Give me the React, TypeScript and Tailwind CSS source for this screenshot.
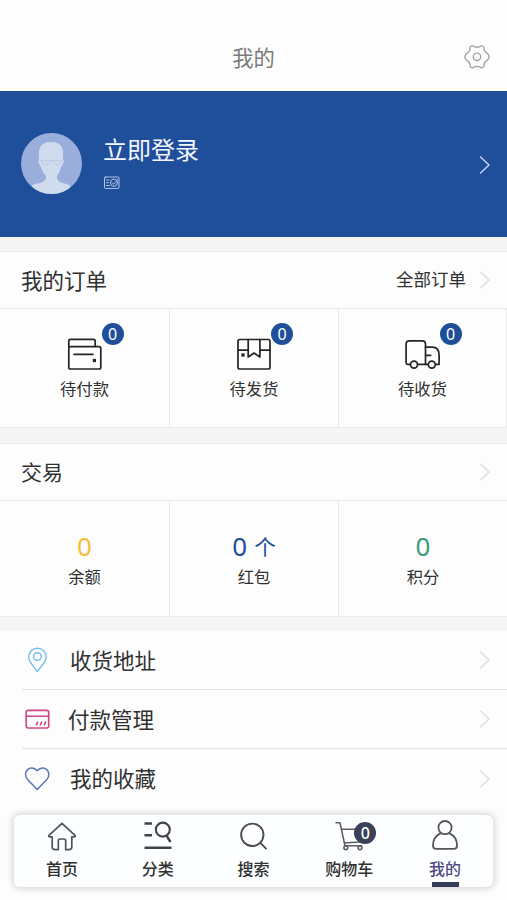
import type { ReactNode } from "react";

const stroke = {
  fill: "none",
  stroke: "currentColor",
  strokeLinecap: "round",
  strokeLinejoin: "round",
} as const;

function Chevron({ className = "text-[#dedede]" }: { className?: string }) {
  return (
    <svg width="12" height="20" viewBox="0 0 12 20" className={className} {...stroke} strokeWidth="1.4">
      <path d="M1.5 2 L10 10 L1.5 18" />
    </svg>
  );
}

function Badge({ className, children }: { className: string; children: ReactNode }) {
  return (
    <span
      className={`absolute flex h-[22px] w-[22px] items-center justify-center rounded-full pb-px font-['Noto_Sans',sans-serif] text-[16px] leading-none text-white ${className}`}
    >
      {children}
    </span>
  );
}

const orders = [
  {
    name: "待付款",
    icon: (
      <svg width="36" height="34" viewBox="0 0 36 34" {...stroke} strokeWidth="1.7">
        <path d="M1.8 8.5 V3 Q1.8 1.3 3.5 1.3 H26.5 Q28.2 1.3 28.2 3 V8.5" />
        <rect x="1.8" y="8.7" width="32" height="22.3" rx="1.8" />
        <path d="M7 16.3 H26" />
        <rect x="25.8" y="20.9" width="3.2" height="3.2" fill="currentColor" stroke="none" />
      </svg>
    ),
  },
  {
    name: "待发货",
    icon: (
      <svg width="36" height="34" viewBox="0 0 36 34" {...stroke} strokeWidth="1.7">
        <rect x="2" y="1.5" width="32" height="29.5" rx="1.8" />
        <path d="M2 12.2 H12 M24 12.2 H34" />
        <path d="M12.2 1.5 V19 L18 15 L23.9 19 V1.5" />
        <rect x="5.4" y="15.4" width="3.2" height="3.2" fill="currentColor" stroke="none" />
      </svg>
    ),
  },
  {
    name: "待收货",
    icon: (
      <svg width="36" height="34" viewBox="0.7 0 36 34" {...stroke} strokeWidth="1.7">
        <path d="M5.8 26.3 H3.2 Q1.8 26.3 1.8 24.8 V6 Q1.8 2.8 5 2.8 H18 Q21.2 2.8 21.2 6 V26.3 H13.6" />
        <path d="M21.2 9.2 H28 Q34.8 9.2 34.8 17 V26.3 H31.4 M21.2 26.3 H23.6 M21.5 17.4 H26.3" />
        <circle cx="9.7" cy="26.6" r="3.5" />
        <circle cx="27.5" cy="26.6" r="3.5" />
      </svg>
    ),
  },
];

const assets = [
  { name: "余额", value: "0", unit: "", color: "text-[#f5bd38]" },
  { name: "红包", value: "0", unit: "个", color: "text-[#1f4e9c]" },
  { name: "积分", value: "0", unit: "", color: "text-[#3a9b82]" },
];

const menu = [
  {
    name: "收货地址",
    gap: "ml-[19px]",
    icon: (
      <svg width="28" height="28" viewBox="0 0 28 28" className="text-[#72bdf0]" {...stroke} strokeWidth="1.4">
        <path d="M14.4 25.5 C11.9 21.5 5.6 16.5 5.6 10.8 A8.8 8.6 0 0 1 23.2 10.8 C23.2 16.5 16.9 21.5 14.4 25.5 Z" />
        <circle cx="14.4" cy="10.5" r="3.8" />
      </svg>
    ),
  },
  {
    name: "付款管理",
    gap: "ml-[17px]",
    icon: (
      <svg width="28" height="28" viewBox="0 0 28 28" className="text-[#cf4686]" {...stroke} strokeWidth="1.6">
        <rect x="3.2" y="5.4" width="22.5" height="17.6" rx="2" />
        <path d="M3.2 11.2 H25.7 M13.4 19.8 L14.6 17.2 M17.4 19.8 L18.6 17.2 M21.4 19.8 L22.6 17.2" />
      </svg>
    ),
  },
  {
    name: "我的收藏",
    gap: "ml-[19px]",
    icon: (
      <svg width="28" height="28" viewBox="0 0 28 28" className="text-[#5578b8]" {...stroke} strokeWidth="1.5">
        <path d="M14.2 24.5 L4.6 14.6 C-1.6 7 7.6 -1.4 14.2 5.8 C20.8 -1.4 30 7 23.8 14.6 Z" />
      </svg>
    ),
  },
];

const tabs = [
  {
    name: "首页",
    icon: (
      <svg width="32" height="32" viewBox="0 0 32 32" className="text-[#50525a]" {...stroke} strokeWidth="1.7">
        <path d="M16 2.4 L29 14.3 Q30 15.8 28.2 15.8 H25.8 V26 Q25.8 28.6 23 28.6 H19.7 V20 Q19.7 18 18 18 H14 Q12.3 18 12.3 20 V28.6 H9 Q6.2 28.6 6.2 26 V15.8 H3.8 Q2 15.8 3 14.3 Z" />
      </svg>
    ),
  },
  {
    name: "分类",
    icon: (
      <svg width="32" height="32" viewBox="0 0 32 32" className="text-[#42434a]" {...stroke} strokeWidth="2.5" strokeLinecap="butt">
        <path d="M2.5 2.6 H10 M2.5 14.2 H10 M2.5 26.8 H29.5" />
        <circle cx="20.8" cy="8.6" r="7" strokeWidth="2.1" />
        <path d="M24.4 14.4 L28.5 21" />
      </svg>
    ),
  },
  {
    name: "搜索",
    icon: (
      <svg width="32" height="32" viewBox="0 0 32 32" className="text-[#4b4c54]" {...stroke} strokeWidth="1.9">
        <circle cx="15.3" cy="13.8" r="11.2" />
        <path d="M23.2 21.7 L29 27.6" />
      </svg>
    ),
  },
  {
    name: "购物车",
    badge: "0",
    icon: (
      <svg width="32" height="32" viewBox="0 0 32 32" className="text-[#5c5d64]" {...stroke} strokeWidth="1.6">
        <path d="M3 1.8 H7 L12 24.8 H28.6 M8.4 8.2 H29 L26.6 21 L11.2 22" />
        <circle cx="12.8" cy="26.8" r="1.9" />
        <circle cx="27" cy="26.8" r="1.9" />
      </svg>
    ),
  },
  {
    name: "我的",
    active: true,
    icon: (
      <svg
        width="32"
        height="32"
        viewBox="0 0 32 32"
        className="overflow-visible text-[#55565d]"
        {...stroke}
        strokeWidth="1.8"
      >
        <circle cx="16" cy="6.6" r="6.6" />
        <path d="M11.3 12.4 C6.5 14.8 4 19 4 24.4 Q4 27.8 7.2 27.8 H24.8 Q28 27.8 28 24.4 C28 19 25.5 14.8 20.7 12.4" />
      </svg>
    ),
  },
];

function Avatar() {
  return (
    <svg width="61" height="61" viewBox="0 0 61 61" className="-mt-0.5">
      <defs>
        <clipPath id="avatar">
          <circle cx="30.5" cy="30.5" r="30.5" />
        </clipPath>
      </defs>
      <g clipPath="url(#avatar)">
        <rect width="61" height="61" fill="#9aaedb" />
        <path
          d="M18 26 V18 Q19 9 30 9 Q41 9 42 18 V26 Q43.5 27 42 31 L40.5 33 Q39 39 36 43 V46 Q38 50 46 51 Q51 53 55 62 H6 Q8 53 14 51 Q23 50 25 46 V43 Q21 39 19.5 33 L18 31 Q16.5 27 18 26 Z"
          fill="#d0dbee"
        />
        <path
          d="M18 27.5 H42 M21 28 Q21 32 25 32 Q28.5 32 29 28 M31.5 28 Q32 32 36 32 Q39.5 32 40 28"
          fill="none"
          stroke="#bdcae2"
          strokeWidth="1"
        />
      </g>
    </svg>
  );
}

export default function App() {
  return (
    <div className="flex h-[900px] w-full flex-col overflow-hidden bg-[#fdfdfd] font-['Noto_Sans_CJK_SC',sans-serif] text-[#303030]">
      <header className="grid h-[91px] shrink-0 grid-cols-3 items-center px-4 pt-[23px]">
        <h1 className="col-start-2 pb-px text-center text-[21.3px] leading-none text-[#7b7b7b]">我的</h1>
        <svg width="28" height="26" viewBox="0 0 28 26" className="justify-self-end text-[#a3a3a3]" {...stroke} strokeWidth="1.4">
          <path d="M10 2 Q14 4.4 18 2 Q20.8 1.4 21 4.4 Q20.8 7.4 23.6 8.8 Q26.2 10.4 26.2 12.8 Q26.2 15.2 23.6 16.8 Q20.8 18.2 21 21.2 Q20.8 24.2 18 23.6 Q14 21.2 10 23.6 Q7.2 24.2 7 21.2 Q7.2 18.2 4.4 16.8 Q1.8 15.2 1.8 12.8 Q1.8 10.4 4.4 8.8 Q7.2 7.4 7 4.4 Q7.2 1.4 10 2 Z" />
          <circle cx="14" cy="12.8" r="3.7" />
        </svg>
      </header>

      {/* Login */}
      <section className="flex h-[146px] shrink-0 items-center bg-[#1f4e9b] pr-4 pl-[21px] text-[#f4f7ff]">
        <Avatar />
        <div className="ml-[21px] flex-1 pb-[5px]">
          <div className="text-[24px] leading-[30px]">立即登录</div>
          <svg width="18" height="14" viewBox="0 0 18 14" className="mt-3 text-[#b5c6e6]" {...stroke} strokeWidth="1">
            <rect x="1.5" y="1" width="14.5" height="11.4" rx="0.8" />
            <circle cx="11" cy="6.7" r="3.6" />
            <path d="M9.2 6.8 L10.7 8.3 L14.5 3.5 M3.5 4 H6 M3.5 6.7 H5.5 M3.5 9.5 H6.5" />
          </svg>
        </div>
        <Chevron className="mt-px text-[#cbd8f2]" />
      </section>

      <div className="flex shrink-0 flex-col gap-[15px] bg-[#f5f5f5] py-[14px]">
        {/* Orders */}
        <section className="border-y border-[#eaeaea]">
          <div className="flex h-14 items-center justify-between bg-[#fdfdfd] pr-4 pl-[21px]">
            <h2 className="pb-px text-[21.5px] leading-none">我的订单</h2>
            <div className="flex items-center gap-[13px]">
              <span className="pb-0.5 text-[17.5px] leading-none">全部订单</span>
              <Chevron />
            </div>
          </div>
          <div className="grid h-[119px] grid-cols-3 border-t border-[#e9e9e9] bg-[#fdfdfd]">
            {orders.map((item) => (
              <div
                key={item.name}
                className="flex flex-col items-center border-l border-[#e9e9e9] pt-[29px] first:border-l-0 last:border-r"
              >
                <div className="relative text-[#242424]">
                  {item.icon}
                  <Badge className="-top-[15px] left-[35px] bg-[#1f4e9b]">0</Badge>
                </div>
                <span className="mt-2 text-[16.3px] leading-none">{item.name}</span>
              </div>
            ))}
          </div>
        </section>

        {/* Assets */}
        <section className="border-y border-[#eaeaea]">
          <div className="flex h-14 items-center justify-between bg-[#fdfdfd] pr-4 pl-[21px]">
            <h2 className="pb-0.5 text-[21px] leading-none">交易</h2>
            <Chevron />
          </div>
          <div className="grid h-[116px] grid-cols-3 border-t border-[#e9e9e9] bg-[#fdfdfd]">
            {assets.map((item) => (
              <div key={item.name} className="flex flex-col items-center border-l border-[#e9e9e9] pt-8 first:border-l-0">
                <div className={`flex h-[26px] items-center gap-[7px] ${item.color}`}>
                  <span className="font-['Noto_Sans',sans-serif] text-[26px] leading-none">{item.value}</span>
                  {item.unit && <span className="text-[21.5px] leading-none">{item.unit}</span>}
                </div>
                <span className="mt-[9px] text-[16.3px] leading-none">{item.name}</span>
              </div>
            ))}
          </div>
        </section>
      </div>

      {/* Menu */}
      <ul className="shrink-0 pl-[22px]">
        {menu.map((item) => (
          <li key={item.name} className="flex h-[59px] items-center border-b border-[#e4e4e4] pr-4 pl-px last:border-b-0">
            {item.icon}
            <span className={`flex-1 pb-px text-[21.5px] leading-none ${item.gap}`}>{item.name}</span>
            <Chevron />
          </li>
        ))}
      </ul>

      {/* Tab bar */}
      <nav className="mx-[14px] mt-auto mb-[13px] grid h-[72px] shrink-0 grid-cols-5 rounded-md bg-[#fdfeff] shadow-[0_0_6px_2px_rgba(0,0,0,0.15)]">
        {tabs.map((tab) => (
          <div key={tab.name} className="flex flex-col items-center pt-1.5">
            <div className="relative">
              {tab.icon}
              {tab.badge && <Badge className="top-px left-[21px] bg-[#3a4158] font-medium">{tab.badge}</Badge>}
            </div>
            <span className={`mt-[7px] text-[16px] leading-none font-medium ${tab.active ? "text-[#504987]" : "text-[#303030]"}`}>
              {tab.name}
            </span>
            {tab.active && <span className="mt-auto h-[5px] w-[27px] bg-[#353d59]" />}
          </div>
        ))}
      </nav>
    </div>
  );
}
